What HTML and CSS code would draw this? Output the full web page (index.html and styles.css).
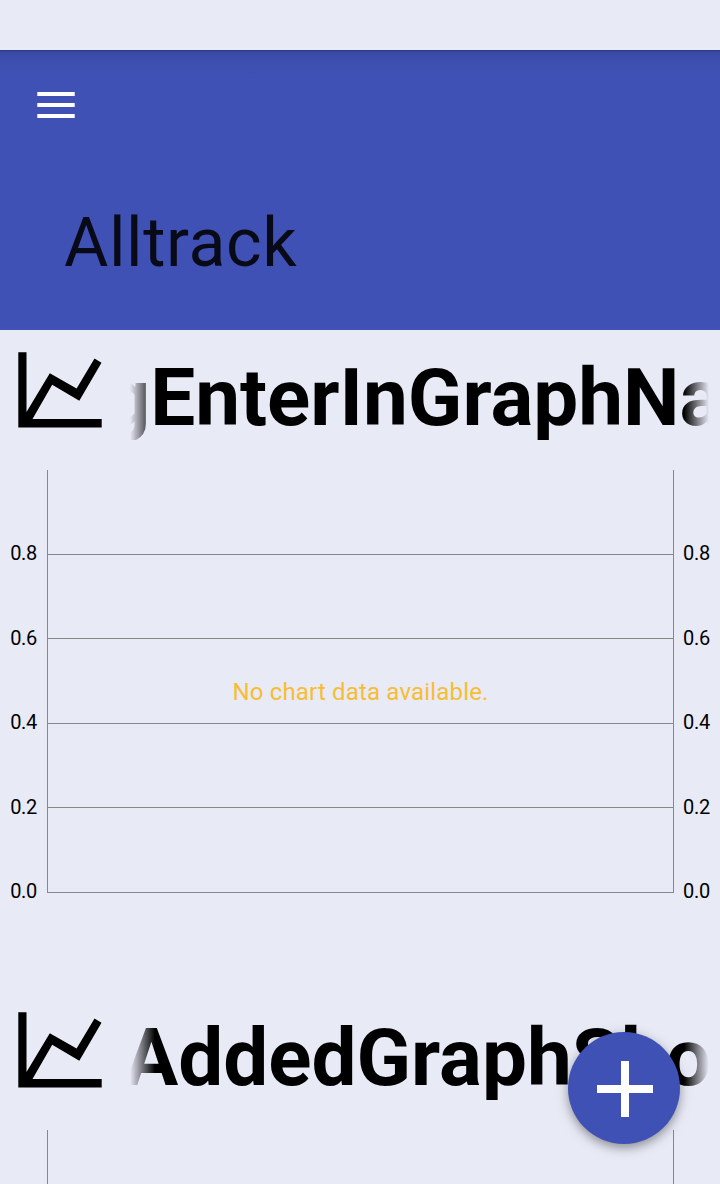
FILE: index.html
```html
<!DOCTYPE html>
<html lang="en">
<head>
<meta charset="utf-8">
<title>Alltrack</title>
<link rel="stylesheet" href="styles.css">
</head>
<body>
<div class="screen">
  <div class="status-bar"></div>
  <header class="app-bar">
    <svg class="menu-icon" viewBox="0 0 38 26" aria-label="Menu"><path d="M.3 0h37.4v4H.3zM.3 11h37.4v4H.3zM.3 22h37.4v4H.3z"/></svg>
    <h1 class="app-title">Alltrack</h1>
  </header>
  <main>
    <section class="graph">
      <div class="graph-head">
        <svg class="graph-icon" viewBox="0 0 84 76"><path d="M.3 .3H8.5V60L31.8 21.3L58.6 36.5L76.5 6.6L83.5 10.8L61.3 48.7L34.2 32.7L14.5 67H83.7V75.4H.3Z"/></svg>
        <h2 class="graph-name"><span class="marquee marquee-first">gEnterInGraphNa</span></h2>
      </div>
      <div class="chart">
        <div class="axis"><span>0.8</span><span>0.6</span><span>0.4</span><span>0.2</span><span>0.0</span></div>
        <div class="plot">
          <div class="band"></div><div class="band"></div><div class="band"></div><div class="band"></div><div class="band"></div>
          <p class="empty">No chart data available.</p>
        </div>
        <div class="axis axis-right"><span>0.8</span><span>0.6</span><span>0.4</span><span>0.2</span><span>0.0</span></div>
      </div>
    </section>
    <section class="graph">
      <div class="graph-head">
        <svg class="graph-icon" viewBox="0 0 84 76"><path d="M.3 .3H8.5V60L31.8 21.3L58.6 36.5L76.5 6.6L83.5 10.8L61.3 48.7L34.2 32.7L14.5 67H83.7V75.4H.3Z"/></svg>
        <h2 class="graph-name"><span class="marquee marquee-second">AddedGraphSho</span></h2>
      </div>
      <div class="chart">
        <div class="axis"></div>
        <div class="plot"><div class="band"></div></div>
        <div class="axis axis-right"></div>
      </div>
    </section>
  </main>
  <button class="fab" aria-label="Add graph"><svg class="plus" viewBox="0 0 56 56"><path d="M24 0h8v24h24v8H32v24h-8V32H0v-8h24z"/></svg></button>
</div>
</body>
</html>
```
FILE: styles.css
```css
* { box-sizing: border-box; }
body { margin: 0; background: #e8eaf6; font-family: Roboto, sans-serif; color: #000; }
.screen { position: relative; width: 720px; height: 1184px; overflow: hidden; }
.status-bar { height: 50px; }
.app-bar {
  height: 280px;
  padding: 42px 37px 0;
  background: linear-gradient(#2b377c 0, #34429a 1px, #3a4ba6 3px, #3d4fae 12px, #3f51b5 26px);
}
.menu-icon { display: block; width: 38px; height: 26px; fill: #fff; }
.app-title {
  margin: 85px 0 0 27px;
  font-size: 68px;
  line-height: 80px;
  font-weight: 400;
  letter-spacing: .6px;
  color: rgba(0, 0, 0, .87);
}
.graph { height: 660px; }
.graph-head { display: flex; height: 140px; padding: 20px 11px 0 18px; }
.graph-icon { flex: none; width: 84px; height: 76px; margin: 2px 28px 0 0; }
.graph-name {
  flex: 1;
  min-width: 0;
  height: 90px;
  margin: 0;
  overflow: hidden;
  white-space: nowrap;
  font-size: 80px;
  line-height: 96px;
  font-weight: 700;
  mask-image: linear-gradient(90deg, transparent, #000 25px, #000 calc(100% - 25px), transparent);
}
.marquee { display: block; }
.marquee-first { margin-left: -25.5px; }
.marquee-second { margin-left: -5.5px; }
.chart { display: flex; height: 423px; }
.axis {
  display: flex;
  flex-direction: column;
  width: 47px;
  padding: 41.4px 10px 0 0;
  text-align: right;
  font-size: 20px;
  letter-spacing: -.3px;
}
.axis span { flex: none; height: 84.4px; line-height: 84.4px; }
.axis-right { width: 46px; padding: 41.4px 0 0 9px; text-align: left; }
.plot {
  position: relative;
  width: 627px;
  border: solid #888;
  border-width: 0 1px;
}
.band { height: 84.4px; border-bottom: 1px solid #888; }
.band:first-child { height: 85px; }
.empty {
  position: absolute;
  inset: 207px 0 auto;
  margin: 0;
  text-align: center;
  font-size: 24px;
  line-height: 30px;
  letter-spacing: .17px;
  color: #f7bd33;
}
.fab {
  position: absolute;
  left: 568px;
  top: 1032px;
  display: flex;
  align-items: center;
  justify-content: center;
  width: 112px;
  height: 112px;
  padding: 2px 0 0 2px;
  border: 0;
  border-radius: 50%;
  background: #3f51b5;
  box-shadow: 0 4px 8px rgba(0, 0, 0, .28), 0 3px 16px rgba(0, 0, 0, .14);
}
.plus { display: block; width: 56px; height: 56px; fill: #fff; }
```
